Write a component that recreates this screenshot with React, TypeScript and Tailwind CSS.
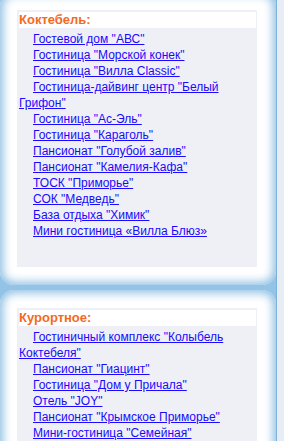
const sections = [
  {
    title: "Коктебель:",
    items: [
      'Гостевой дом "АВС"',
      'Гостиница "Морской конек"',
      'Гостиница "Вилла Classic"',
      'Гостиница-дайвинг центр "Белый Грифон"',
      'Гостиница "Ас-Эль"',
      'Гостиница "Караголь"',
      'Пансионат "Голубой залив"',
      'Пансионат "Камелия-Кафа"',
      'ТОСК "Приморье"',
      'СОК "Медведь"',
      'База отдыха "Химик"',
      "Мини гостиница «Вилла Блюз»",
    ],
  },
  {
    title: "Курортное:",
    items: [
      'Гостиничный комплекс "Колыбель Коктебеля"',
      'Пансионат "Гиацинт"',
      'Гостиница "Дом у Причала"',
      'Отель "JOY"',
      'Пансионат "Крымское Приморье"',
      'Мини-гостиница "Семейная"',
    ],
  },
];

function Panel({ title, items, first }: { title: string; items: string[]; first?: boolean }) {
  return (
    <div
      className={`${first ? "-mt-[8px]" : ""} h-[293px] shrink-0 rounded-[14px] bg-white pt-[18px] pl-[17px] pr-[19px] pb-[18px] shadow-[inset_0_0_10px_3px_#8fbfe3]`}
    >
      <div className="h-full bg-[#eff0f5] p-[2px] pr-[1px]">
        <div className="h-[16px] bg-white text-[13px] font-bold leading-[16px] text-[#f36a1e]">
          {title}
        </div>
        <ul className="mt-[3px] text-[12px] leading-[16px]">
          {items.map((item) => (
            <li key={item} className="indent-[14px]">
              <a href="#" className="text-[#1a0aff] underline">
                {item}
              </a>
            </li>
          ))}
        </ul>
      </div>
    </div>
  );
}

export default function App() {
  return (
    <div
      className="flex h-[441px] w-[284px] overflow-hidden bg-[#e6edf4]"
      style={{ fontFamily: '"Liberation Sans", Arial, sans-serif' }}
    >
      <div className="flex w-[277px] shrink-0 flex-col gap-[5px] border-r border-[#7fb0d8] bg-[#93c3e6]">
        <Panel title={sections[0].title} items={sections[0].items} first />
        <Panel title={sections[1].title} items={sections[1].items} />
      </div>
    </div>
  );
}
